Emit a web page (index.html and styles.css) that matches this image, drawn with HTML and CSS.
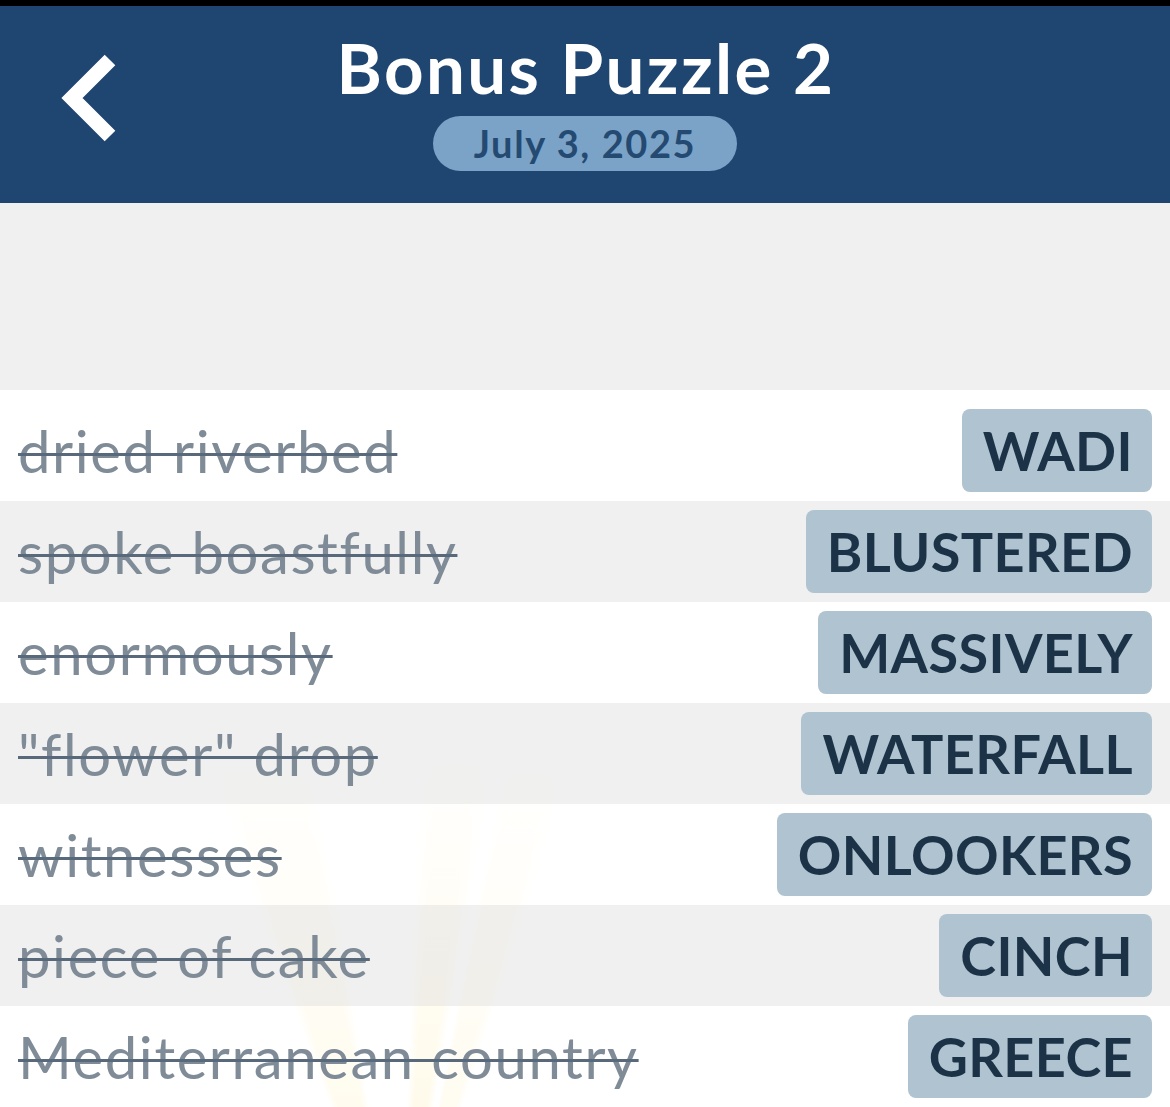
FILE: index.html
```html
<!DOCTYPE html>
<html lang="en">
<head>
  <meta charset="UTF-8">
  <meta name="viewport" content="width=device-width, initial-scale=1.0">
  <title>Bonus Puzzle 2</title>
  <link rel="stylesheet" href="styles.css">
</head>
<body>
  <div class="status-strip"></div>

  <header class="nav">
    <button class="back" aria-label="Back">
      <svg width="80" height="100" viewBox="0 0 80 100">
        <polyline points="64,12 26,50 64,88" fill="none" stroke="#fff" stroke-width="15" stroke-linecap="butt" stroke-linejoin="miter"/>
      </svg>
    </button>
    <div class="title-block">
      <h1>Bonus Puzzle 2</h1>
      <div class="date-pill">July 3, 2025</div>
    </div>
    <div></div>
  </header>

  <div class="gap"></div>

  <div class="answers">
    <div class="row">
      <span class="clue">dried riverbed</span>
      <span class="tile">WADI</span>
    </div>
    <div class="row">
      <span class="clue">spoke boastfully</span>
      <span class="tile">BLUSTERED</span>
    </div>
    <div class="row">
      <span class="clue">enormously</span>
      <span class="tile">MASSIVELY</span>
    </div>
    <div class="row">
      <span class="clue">"flower" drop</span>
      <span class="tile">WATERFALL</span>
    </div>
    <div class="row">
      <span class="clue">witnesses</span>
      <span class="tile">ONLOOKERS</span>
    </div>
    <div class="row">
      <span class="clue">piece of cake</span>
      <span class="tile">CINCH</span>
    </div>
    <div class="row">
      <span class="clue">Mediterranean country</span>
      <span class="tile">GREECE</span>
    </div>
  </div>
</body>
</html>
```

FILE: styles.css
```css
body {
  margin: 0;
  background-color: #f0f0f0;
  font-family: Lato, "Open Sans", sans-serif;
  overflow: hidden;
}
.status-strip {
  height: 6px;
  background-color: #000;
}
.nav {
  height: 197px;
  background-color: #1f4571;
  display: grid;
  grid-template-columns: 1fr auto 1fr;
  align-items: start;
}
.back {
  background: none;
  border: none;
  padding: 0;
  margin: 42px 0 0 46px;
  width: 80px;
  height: 100px;
  cursor: pointer;
}
.back svg {
  display: block;
}
.title-block {
  display: flex;
  flex-direction: column;
  align-items: center;
}
h1 {
  margin: 18px 0 0;
  color: #fff;
  font-size: 69px;
  font-weight: 700;
  line-height: 88px;
  letter-spacing: 2.4px;
  padding-left: 2px;
}
.date-pill {
  margin-top: 4px;
  width: 304px;
  height: 55px;
  line-height: 55px;
  border-radius: 28px;
  background-color: #7ba3c8;
  color: #244a72;
  font-size: 38px;
  font-weight: 700;
  letter-spacing: 1.6px;
  text-align: center;
}
.gap {
  height: 187px;
}
.answers {
  padding-top: 10px;
  background-color: #fff;
  background-image:
    linear-gradient(to bottom, #fff 50%, rgba(255,255,255,0) 100%),
    conic-gradient(from 0deg at 400px 910px,
      rgba(255,255,255,0) 0deg 2deg,
      rgba(255,224,120,0.5) 4deg 8deg,
      rgba(255,255,255,0) 10deg 11deg,
      rgba(255,224,120,0.35) 12deg 16deg,
      rgba(255,255,255,0) 18deg 340deg,
      rgba(255,224,120,0.4) 342deg 349deg,
      rgba(255,255,255,0) 351deg 360deg);
}
.row {
  height: 101px;
  display: flex;
  align-items: center;
  justify-content: space-between;
  padding: 0 18px;
  background-color: rgba(255,255,255,0.7);
}
.row:nth-child(even) {
  background-color: rgba(236,236,236,0.8);
}
.clue {
  color: #7f8b97;
  font-size: 58px;
  letter-spacing: 1.6px;
  text-decoration: line-through;
  text-decoration-color: #57697a;
  text-decoration-thickness: 3px;
}
.tile {
  height: 83px;
  line-height: 83px;
  padding: 0 19px 0 21px;
  border-radius: 8px;
  background-color: #b0c3d0;
  color: #1c3247;
  font-size: 54px;
  font-weight: 700;
  letter-spacing: 0.4px;
}
```
